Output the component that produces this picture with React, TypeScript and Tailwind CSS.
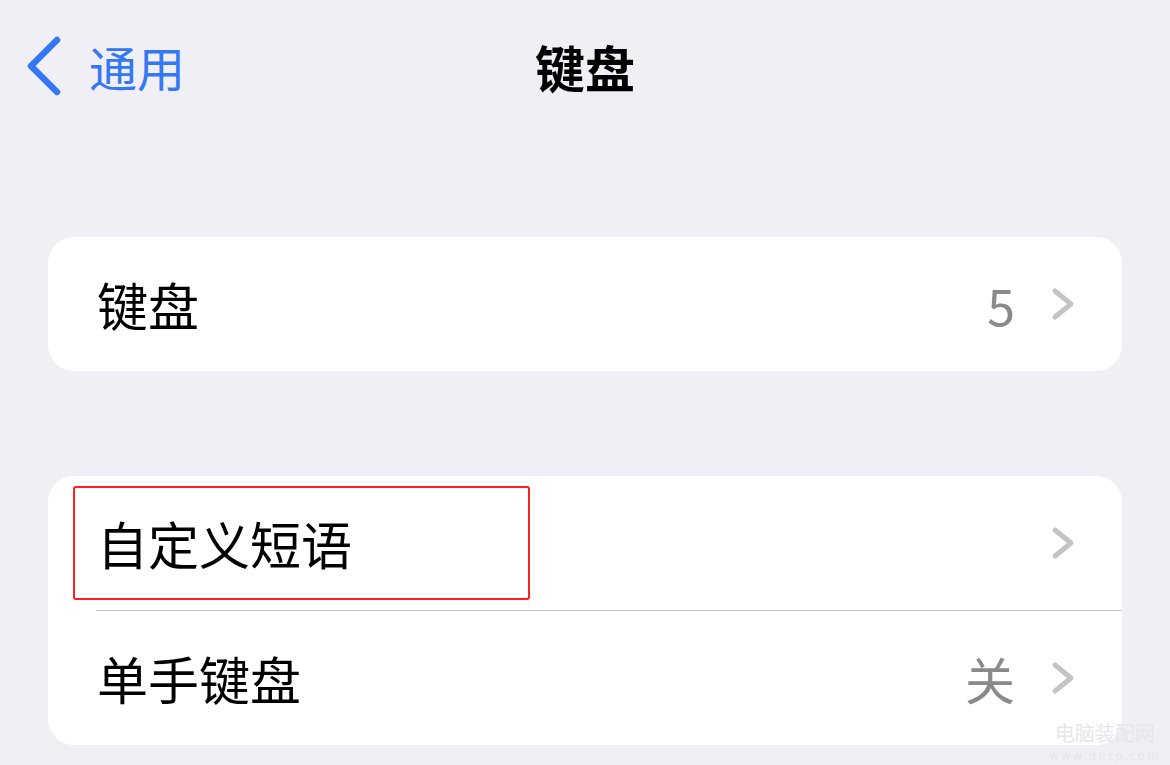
import type { ReactNode } from "react";

type Row = {
  label: string;
  value?: string;
  highlighted?: boolean;
};

const groups: Row[][] = [
  [{ label: "键盘", value: "5" }],
  [
    { label: "自定义短语", highlighted: true },
    { label: "单手键盘", value: "关" }
  ]
];

function Chevron() {
  return (
    <svg aria-hidden="true" width="24" height="34" viewBox="0 0 24 34" fill="none">
      <polyline
        points="4,4 20,17 4,30"
        stroke="#c4c4c7"
        strokeWidth="5"
        strokeLinecap="round"
        strokeLinejoin="round"
      />
    </svg>
  );
}

function BackChevron() {
  return (
    <svg aria-hidden="true" width="36" height="60" viewBox="0 0 36 60" fill="none">
      <polyline
        points="31,4 5,30 31,56"
        stroke="#3478f6"
        strokeWidth="6.5"
        strokeLinecap="round"
        strokeLinejoin="round"
      />
    </svg>
  );
}

function Card({ children }: { children: ReactNode }) {
  return <section className="mx-[48px] overflow-hidden rounded-[26px] bg-white">{children}</section>;
}

function SettingsRow({ row, divider }: { row: Row; divider: boolean }) {
  return (
    <div className="relative">
      {divider ? <div className="ml-[48px] h-px bg-[#c6c6c8]" /> : null}
      <div className="flex h-[134px] items-center justify-between pl-[49px] pr-[47px]">
        <span className="text-[51px] leading-none text-black">{row.label}</span>
        <div className="flex items-center gap-[36px]">
          {row.value ? <span className="text-[50px] leading-none text-[#8a8a8e]">{row.value}</span> : null}
          <Chevron />
        </div>
      </div>
      {row.highlighted ? (
        <div className="pointer-events-none absolute left-[25px] top-[10px] h-[114px] w-[457px] rounded-[3px] border-2 border-[#ff1f1a]" />
      ) : null}
    </div>
  );
}

export default function App() {
  return (
    <div className="relative h-[765px] w-[1170px] overflow-hidden bg-[#f0eff5] font-['Noto_Sans_CJK_SC','Noto_Sans',sans-serif]">
      <header className="grid h-[132px] grid-cols-[1fr_auto_1fr] items-center">
        <button type="button" className="flex items-center gap-[27px] justify-self-start pl-[26px] text-[#3478f6]">
          <BackChevron />
          <span className="text-[48px] leading-none">通用</span>
        </button>
        <h1 className="text-[50px] font-bold leading-none text-black">键盘</h1>
        <div />
      </header>

      <div className="mt-[105px] flex flex-col gap-[105px]">
        {groups.map((group, gi) => (
          <Card key={gi}>
            {group.map((row, ri) => (
              <SettingsRow key={row.label} row={row} divider={ri > 0} />
            ))}
          </Card>
        ))}
      </div>

      <div className="pointer-events-none absolute bottom-[4px] right-[10px] flex flex-col items-center gap-[4px] text-[#e6e6ec]">
        <span className="text-[20px] leading-[22px]">电脑装配网</span>
        <span className="text-[12px] leading-[13px] tracking-[2px]">www.dnzp.com</span>
      </div>
    </div>
  );
}
